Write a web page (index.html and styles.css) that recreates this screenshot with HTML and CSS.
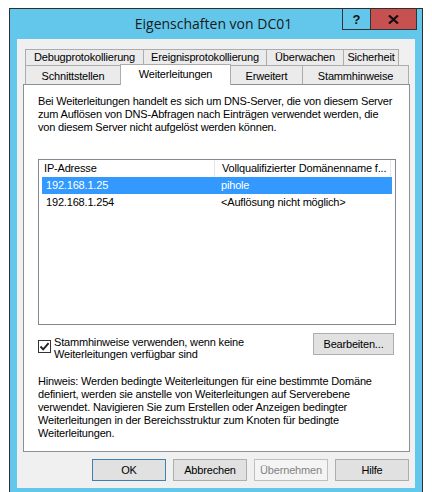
FILE: index.html
```html
<!DOCTYPE html>
<html lang="de">
<head>
<meta charset="utf-8">
<title>Eigenschaften von DC01</title>
<link rel="stylesheet" href="styles.css">
</head>
<body>
<div class="window">
  <div class="titlebar">
    <span class="spacer"></span>
    <div class="title">Eigenschaften von DC01</div>
    <div class="caption-btns">
      <div class="cb help">?</div>
      <div class="cb close">
        <svg width="11" height="9" viewBox="0 0 11 9"><path d="M1 0.5 L10 8.5 M10 0.5 L1 8.5" stroke="#111" stroke-width="2.2" fill="none"/></svg>
      </div>
    </div>
  </div>
  <div class="client">
    <div class="tabs">
      <div class="tabrow upper">
        <div class="tab w-debug">Debugprotokollierung</div>
        <div class="tab w-ereignis">Ereignisprotokollierung</div>
        <div class="tab w-ueber">Überwachen</div>
        <div class="tab w-sicher">Sicherheit</div>
      </div>
      <div class="tabrow lower">
        <div class="tab w-schnitt">Schnittstellen</div>
        <div class="tab w-weiter selected">Weiterleitungen</div>
        <div class="tab w-erweitert">Erweitert</div>
        <div class="tab w-stamm">Stammhinweise</div>
      </div>
    </div>
    <div class="panel">
      <p class="desc">Bei Weiterleitungen handelt es sich um DNS-Server, die von diesem Server<br>zum Auflösen von DNS-Abfragen nach Einträgen verwendet werden, die<br>von diesem Server nicht aufgelöst werden können.</p>
      <div class="list">
        <div class="lrow header">
          <div class="c1">IP-Adresse</div>
          <div class="c2">Vollqualifizierter Domänenname f...</div>
        </div>
        <div class="lrow item sel">
          <div class="c1">192.168.1.25</div>
          <div class="c2">pihole</div>
        </div>
        <div class="lrow item">
          <div class="c1">192.168.1.254</div>
          <div class="c2">&lt;Auflösung nicht möglich&gt;</div>
        </div>
      </div>
      <div class="opts">
        <label class="check">
          <span class="box"><svg width="11" height="11" viewBox="0 0 11 11"><path d="M1.5 5.5 L4.2 8.3 L9.6 2.2" stroke="#222" stroke-width="1.9" fill="none"/></svg></span>
          <span class="check-text">Stammhinweise verwenden, wenn keine<br>Weiterleitungen verfügbar sind</span>
        </label>
        <button class="btn edit">Bearbeiten...</button>
      </div>
      <p class="note">Hinweis: Werden bedingte Weiterleitungen für eine bestimmte Domäne<br>definiert, werden sie anstelle von Weiterleitungen auf Serverebene<br>verwendet. Navigieren Sie zum Erstellen oder Anzeigen bedingter<br>Weiterleitungen in der Bereichsstruktur zum Knoten für bedingte<br>Weiterleitungen.</p>
    </div>
    <div class="actions">
      <button class="btn default">OK</button>
      <button class="btn">Abbrechen</button>
      <button class="btn disabled">Übernehmen</button>
      <button class="btn">Hilfe</button>
    </div>
  </div>
</div>
</body>
</html>
```

FILE: styles.css
```css
html, body {
  margin: 0;
  padding: 0;
  background: #ffffff;
  overflow: hidden;
}
body {
  width: 432px;
  height: 492px;
  font-family: "Liberation Sans", Arial, sans-serif;
  font-size: 11px;
  letter-spacing: -0.18px;
  color: #000;
}
.window {
  margin: 8px 0 0 9px;
  width: 414px;
  height: 492px;
  box-sizing: border-box;
  border: 1px solid #2e2e2e;
  background: #63c7ec;
  padding: 0 7px;
}
.titlebar {
  margin: 0 -7px;
  height: 30px;
  padding-right: 5px;
  display: grid;
  grid-template-columns: 1fr auto 1fr;
  align-items: start;
}
.title {
  font-family: "Open Sans", "Noto Sans", sans-serif;
  font-size: 14px;
  letter-spacing: 0;
  color: #1a1a1a;
  line-height: 20px;
  padding-top: 5px;
  white-space: nowrap;
}
.caption-btns {
  justify-self: end;
  display: flex;
  border: 1px solid #333;
  border-top: none;
  height: 21px;
  box-sizing: border-box;
}
.cb {
  height: 20px;
  display: flex;
  align-items: center;
  justify-content: center;
}
.help {
  width: 27px;
  border-right: 1px solid #333;
  font-family: "Liberation Sans", Arial, sans-serif;
  font-weight: bold;
  font-size: 13px;
  letter-spacing: 0;
  color: #111;
}
.close {
  width: 45px;
  background: #c75050;
}
.client {
  background: #f0f0f0;
  width: 398px;
  height: 449px;
  box-sizing: border-box;
  padding: 10px 5px 0 6px;
}
.tabs {
  margin-left: 2px;
}
.tabrow {
  display: flex;
}
.tabrow.upper {
  height: 16px;
}
.tabrow.lower {
  height: 19px;
}
.tab {
  box-sizing: border-box;
  border: 1px solid #acacac;
  border-bottom: none;
  background: #ebebeb;
  text-align: center;
  white-space: nowrap;
  color: #000;
}
.tab + .tab {
  margin-left: -1px;
}
.upper .tab {
  height: 16px;
  line-height: 14px;
}
.lower .tab {
  height: 19px;
  line-height: 14px;
  padding-top: 3px;
}
.lower .tab.selected {
  position: relative;
  z-index: 1;
  height: 21px;
  margin-top: -1px;
  background: #ffffff;
  padding-top: 2px;
}
.w-debug { width: 119px; }
.w-ereignis { width: 124px; }
.w-ueber { width: 78px; }
.w-sicher { width: 56px; }
.w-schnitt { width: 96px; }
.w-weiter { width: 111px; }
.w-erweitert { width: 73px; }
.w-stamm { width: 107px; }
.panel {
  width: 387px;
  height: 368px;
  box-sizing: border-box;
  border: 1px solid #8c8f94;
  background: #ffffff;
  padding: 10px 13px 0 14px;
}
.desc {
  margin: 0;
  line-height: 13px;
  white-space: nowrap;
}
.list {
  margin-top: 25px;
  width: 358px;
  height: 166px;
  box-sizing: border-box;
  border: 1px solid #828790;
  padding: 0 3px;
}
.lrow {
  display: flex;
  height: 17px;
  line-height: 17px;
  white-space: nowrap;
}
.lrow .c1 {
  width: 173px;
  box-sizing: border-box;
}
.lrow .c2 {
  width: 176px;
  box-sizing: border-box;
}
.header .c1 {
  padding-left: 2px;
  border-right: 1px solid #e5e5e5;
}
.header .c2 {
  padding-left: 7px;
  border-right: 1px solid #e5e5e5;
}
.item .c1 {
  padding-left: 4px;
}
.item .c2 {
  padding-left: 6px;
}
.item.sel {
  background: #3399ff;
  color: #ffffff;
}
.opts {
  display: flex;
  justify-content: space-between;
  align-items: flex-start;
  margin-top: 8px;
}
.check {
  display: flex;
  align-items: flex-start;
  gap: 3px;
  margin-top: 3px;
  line-height: 12px;
}
.box {
  width: 13px;
  height: 13px;
  box-sizing: border-box;
  border: 1px solid #333;
  background: #fff;
  margin-top: 4px;
  display: flex;
  align-items: center;
  justify-content: center;
}
.check-text {
  white-space: nowrap;
}
.btn {
  font-family: "Liberation Sans", Arial, sans-serif;
  font-size: 11px;
  letter-spacing: -0.18px;
  color: #000;
  background: #e1e1e1;
  border: 1px solid #adadad;
  height: 22px;
  width: 74px;
  padding: 0;
  margin: 0;
  box-sizing: border-box;
}
.btn.edit {
  width: 81px;
  margin-right: 2px;
}
.btn.default {
  border-color: #3c7fb1;
}
.btn.disabled {
  background: #f4f4f4;
  border-color: #bfbfbf;
  color: #838383;
}
.note {
  margin: 15px 0 0;
  line-height: 13px;
  white-space: nowrap;
}
.actions {
  display: flex;
  justify-content: flex-end;
  gap: 7px;
  margin-top: 7px;
  margin-right: 1px;
}
```
